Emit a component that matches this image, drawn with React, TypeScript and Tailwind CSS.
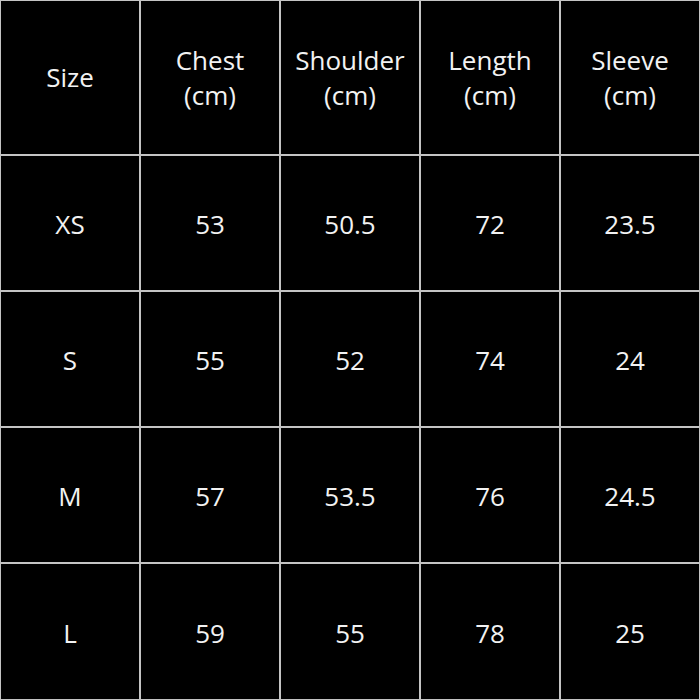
const HEADERS = [
  ["Size"],
  ["Chest", "(cm)"],
  ["Shoulder", "(cm)"],
  ["Length", "(cm)"],
  ["Sleeve", "(cm)"],
];

const ROWS = [
  ["XS", "53", "50.5", "72", "23.5"],
  ["S", "55", "52", "74", "24"],
  ["M", "57", "53.5", "76", "24.5"],
  ["L", "59", "55", "78", "25"],
];

export default function App() {
  return (
    <div
      className="w-[700px] h-[700px] bg-[#c4c4c4] p-[1px] grid grid-cols-5 grid-rows-[153px_134px_134px_134px_135px] gap-[2px] text-[26px] text-[#f2f2f2]"
      style={{ fontFamily: '"Open Sans", sans-serif' }}
    >
      {HEADERS.map((lines, i) => (
        <div key={i} className="bg-black flex flex-col items-center justify-center leading-[35px]">
          {lines.map((l) => (
            <span key={l}>{l}</span>
          ))}
        </div>
      ))}
      {ROWS.map((row, r) =>
        row.map((cell, c) => (
          <div key={`${r}-${c}`} className="bg-black flex items-center justify-center pt-[3px]">
            {cell}
          </div>
        ))
      )}
    </div>
  );
}
